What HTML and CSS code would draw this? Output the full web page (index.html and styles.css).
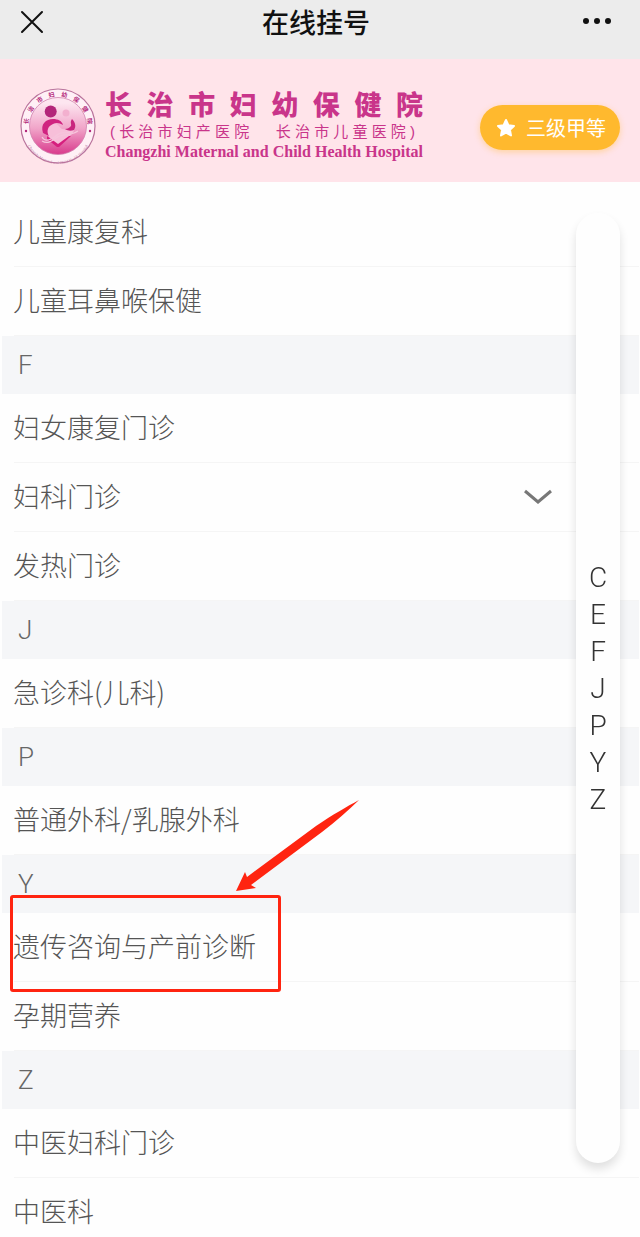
FILE: index.html
```html
<!DOCTYPE html>
<html lang="zh-CN">
<head>
  <meta charset="UTF-8" />
  <meta name="viewport" content="width=device-width, initial-scale=1.0"/>
  <title>在线挂号</title>

  <link rel="stylesheet" href="styles.css">
</head>

<body>

<header class="topbar">
  <button class="icon-btn" aria-label="关闭">
    <svg width="30" height="24" viewBox="0 0 30 24" fill="none" stroke="#111" stroke-width="2" stroke-linecap="round">
      <path d="M2 2L22 22M22 2L2 22"/>
    </svg>
  </button>
  <h1>在线挂号</h1>
  <button class="icon-btn" aria-label="更多">
    <svg width="30" height="24" viewBox="0 0 30 24" fill="#111">
      <circle cx="4" cy="11" r="3"/>
      <circle cx="15" cy="11" r="3"/>
      <circle cx="26" cy="11" r="3"/>
    </svg>
  </button>
</header>

<!-- BANNER -->
<section class="banner">
  <svg class="logo" width="76" height="76" viewBox="0 0 76 76">
    <defs>
      <linearGradient id="disc" x1="0" y1="0" x2="0" y2="1">
        <stop offset="0.1" stop-color="#fde6f0"/>
        <stop offset="0.55" stop-color="#f0a3c8"/>
        <stop offset="1" stop-color="#d9398c"/>
      </linearGradient>
      <path id="ringTop" d="M9 46A30 30 0 1 1 67 46"/>
      <path id="ringBottom" d="M4 42A34 34 0 0 0 72 42"/>
    </defs>
    <circle cx="38" cy="38" r="37" fill="#fff0f6" stroke="#b9739c" stroke-width="1.200"/>
    <circle cx="38" cy="38" r="28.500" fill="url(#disc)" stroke="#d183ae" stroke-width="0.800"/>
    <text class="ring-cn"><textPath href="#ringTop" startOffset="50%" text-anchor="middle">长　治　市　妇　幼　保　健　院</textPath></text>
    <text class="ring-en"><textPath href="#ringBottom" startOffset="50%" text-anchor="middle">Changzhi Maternal and Child Health Hospital</textPath></text>
    <circle cx="6" cy="43" r="1.200" fill="#b3267a"/>
    <circle cx="70" cy="43" r="1.200" fill="#b3267a"/>
    <circle cx="30.700" cy="23.500" r="6" fill="#b3267a"/>
    <circle cx="46" cy="25" r="3.500" fill="#f3b0cf"/>
    <path d="M27 44C27 38 32 35 36 36C39 37 40 40 42 41C47 42 51 41 54 39C55 43 52 46 49 49L38 57L30 50C28 48 27 46 27 44Z" fill="#f7bfd9"/>
    <path d="M23 45C20 36 26 31 33 31C38 31 42 33 43 37C40 35 36 34 33 36C28 38 26 43 29 48Z" fill="#d02380"/>
    <path d="M27 48L38 56L49 48L51 48L39 59L37 59L27 51Z" fill="#d61f7e"/>
    <path d="M50 39C53 37 49 35 52 31C56 35 56 39 54 42C51 43 48 43 45 41C47 41 49 40 50 39Z" fill="#c9267e"/>
    <path d="M22 53C27 56 31 54 36 50C42 45 49 49 58 43M22 49C25 55 33 51 37 47C41 43 46 46 50 44" fill="none" stroke="#f6c5dc" stroke-width="1.200"/>
  </svg>
  <div class="hospital">
    <h2>长 治 市 妇 幼 保 健 院</h2>
    <p class="alias"><span>( 长 治 市 妇 产 医 院</span><span>长 治 市 儿 童 医 院 )</span></p>
    <p class="english">Changzhi Maternal and Child Health Hospital</p>
  </div>
  <div class="grade">
    <svg width="20" height="20" viewBox="0 0 20 20" fill="#fff" stroke="#fff" stroke-width="2" stroke-linejoin="round">
      <path d="M10 2L12.400 7.200L18 7.900L13.900 11.700L15 17.400L10 14.700L5 17.400L6.100 11.700L2 7.900L7.600 7.200Z"/>
    </svg>
    <span>三级甲等</span>
  </div>
</section>

<!-- DEPARTMENTS -->
<main class="departments">
  <a class="dept" href="#">儿童康复科</a>
  <a class="dept" href="#">儿童耳鼻喉保健</a>

  <h3 class="letter" id="F">F</h3>
  <a class="dept" href="#">妇女康复门诊</a>
  <button class="dept">
    <span>妇科门诊</span>
    <svg width="30" height="16" viewBox="0 0 30 16" fill="none" stroke="#777" stroke-width="3">
      <path d="M2 3L15 14L28 3"/>
    </svg>
  </button>
  <a class="dept" href="#">发热门诊</a>

  <h3 class="letter" id="J">J</h3>
  <a class="dept" href="#">急诊科(儿科)</a>

  <h3 class="letter" id="P">P</h3>
  <a class="dept" href="#">普通外科/乳腺外科</a>

  <h3 class="letter" id="Y">Y</h3>
  <div class="marked">
    <a class="dept" href="#">遗传咨询与产前诊断</a>
    <div class="mark-box"></div>
    <svg class="mark-arrow" width="124" height="92" viewBox="0 0 124 92" fill="#ff2410">
      <path d="M0 91L9 72L11 77L80 26C98 14 110 7 123 0C112 11 100 21 86 32L15 85L20 88Z"/>
    </svg>
  </div>
  <a class="dept" href="#">孕期营养</a>

  <h3 class="letter" id="Z">Z</h3>
  <a class="dept" href="#">中医妇科门诊</a>
  <a class="dept" href="#">中医科</a>
</main>

<!-- LETTER INDEX -->
<nav class="index">
  <a href="#C">C</a>
  <a href="#E">E</a>
  <a href="#F">F</a>
  <a href="#J">J</a>
  <a href="#P">P</a>
  <a href="#Y">Y</a>
  <a href="#Z">Z</a>
</nav>

</body>
</html>
```
FILE: styles.css
```css
*{
  margin:0;
  padding:0;
  box-sizing:border-box;
}

body{
  height:100vh;
  display:flex;
  flex-direction:column;
  overflow:hidden;
  background:#fefefe;
  color:#555;
  font-family:"Noto Sans CJK SC", sans-serif;
}

a{
  color:inherit;
  text-decoration:none;
}

button{
  border:none;
  background:none;
  color:inherit;
  font:inherit;
  cursor:pointer;
}

/* TOP BAR */
.topbar{
  flex:none;
  height:59px;
  padding:0 28px 16px 20px;
  display:flex;
  justify-content:space-between;
  align-items:center;
  background:#ececec;
  color:#111;
}

.topbar h1{
  font-size:27px;
  line-height:40px;
  font-weight:500;
}

.icon-btn{
  display:flex;
}

/* BANNER */
.banner{
  flex:none;
  height:123px;
  padding:10px 20px 0;
  display:flex;
  align-items:center;
  background:#ffe4ea;
}

.hospital{
  width:318px;
  margin-left:9px;
  color:#c9358a;
  font-family:"Liberation Sans", "Noto Sans CJK SC", sans-serif;
}

.hospital h2{
  font-size:27px;
  line-height:32px;
  font-weight:900;
  text-align-last:justify;
}

.alias{
  display:flex;
  justify-content:space-between;
  padding:0 8px 0 5px;
  font-size:15px;
  line-height:20px;
}

.english{
  font-family:"Liberation Serif", serif;
  font-size:16px;
  line-height:20px;
  font-weight:bold;
  text-align-last:justify;
}

.ring-cn{
  font-size:6px;
  font-weight:bold;
  fill:#b3267a;
}

.ring-en{
  font-family:"Liberation Serif", serif;
  font-size:4px;
  fill:#b9739c;
}

.grade{
  height:45px;
  margin:4px 0 0 auto;
  padding:0 14px 0 16px;
  display:flex;
  align-items:center;
  gap:10px;
  border-radius:23px;
  background:#ffb92e;
  color:white;
  font-size:20px;
  box-shadow:0 2px 6px rgba(255,185,46,0.4);
}

/* DEPARTMENTS */
.departments{
  flex:1;
  min-height:0;
  overflow:hidden;
  padding:16px 1px 0 2px;
}

.dept{
  width:100%;
  height:69px;
  padding:0 86px 3px 11px;
  display:flex;
  justify-content:space-between;
  align-items:center;
  font-size:27px;
  line-height:40px;
  font-weight:300;
  background:linear-gradient(#f5f5f5,#f5f5f5) 12px 100%/100% 1px no-repeat;
}

.letter{
  height:58px;
  padding-left:16px;
  background:#f5f6f8;
  color:#666;
  font-family:Roboto, sans-serif;
  font-size:26px;
  line-height:58px;
  font-weight:300;
}

.marked{
  position:relative;
}

.mark-box{
  position:absolute;
  left:8px;
  top:-18px;
  width:271px;
  height:97px;
  border:3px solid #ff2410;
  border-radius:3px;
}

.mark-arrow{
  position:absolute;
  left:234px;
  top:-113px;
}

/* LETTER INDEX */
.index{
  position:fixed;
  right:20px;
  top:213px;
  bottom:74px;
  width:44px;
  display:flex;
  flex-direction:column;
  justify-content:center;
  align-items:center;
  border-radius:22px;
  background:#fefefe;
  color:#333;
  font-family:Roboto, sans-serif;
  font-size:28px;
  line-height:37px;
  font-weight:300;
  box-shadow:0 6px 10px rgba(0,0,0,0.12);
}
```
